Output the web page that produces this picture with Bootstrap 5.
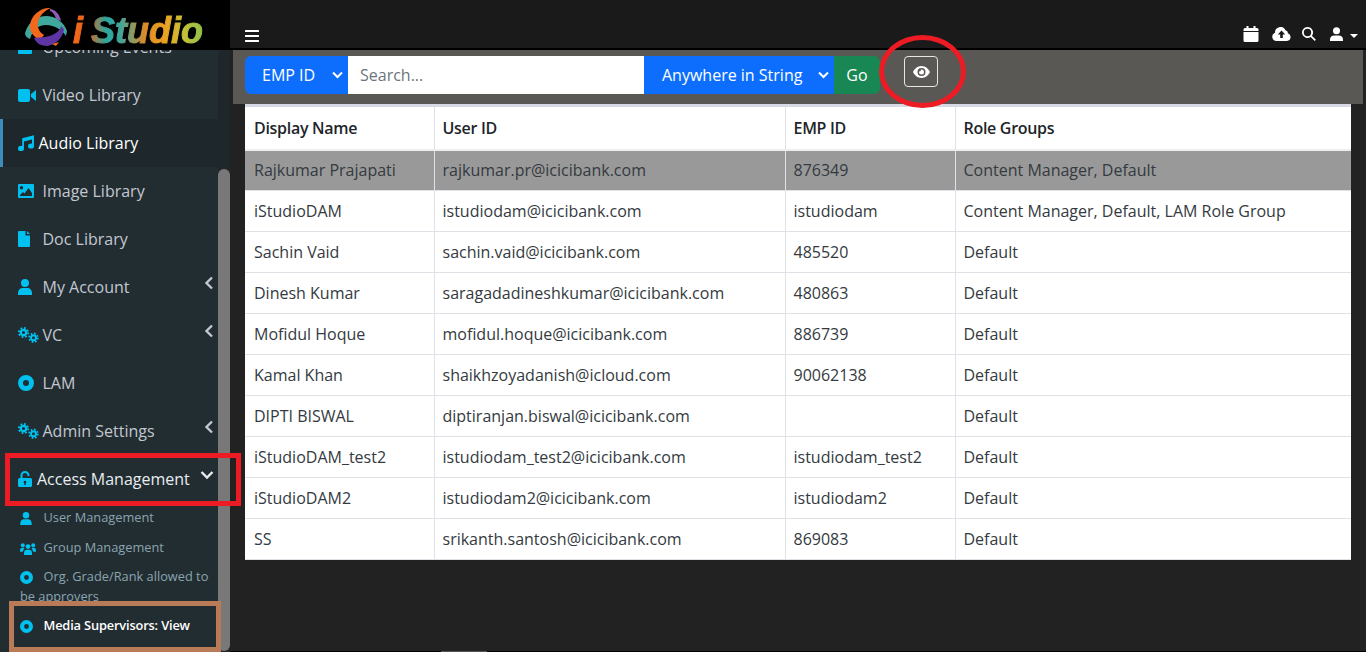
<!DOCTYPE html>
<html lang="en">
<head>
    <meta charset="UTF-8">
    <meta name="viewport" content="width=device-width, initial-scale=1">
    <title>iStudio - Media Supervisors</title>
    <link href="https://cdn.jsdelivr.net/npm/bootstrap@5.3.0/dist/css/bootstrap.min.css" rel="stylesheet">
    <script src="https://cdn.jsdelivr.net/npm/bootstrap@5.3.0/dist/js/bootstrap.bundle.min.js"></script>
    <style>
        html, body { height: 100%; overflow: hidden; }
        body {
            font-family: "Open Sans", "Liberation Sans", sans-serif;
            background: #222;
            position: relative;
            font-size: 16px;
        }

        /* shell */
        .app-shell { height: 652px; }
        .app-side { width: 230px; flex: none; position: relative; height: 652px; overflow: hidden; background: #222; }
        .app-main { flex: 1 1 auto; min-width: 0; height: 652px; }

        /* logo */
        .logo-box { height: 50px; background: #000; position: relative; z-index: 2; padding: 0 0 0 25px; }
        .logo-box svg { margin-top: 3px; flex: none; }
        .logo-word {
            font-family: "Liberation Sans", sans-serif;
            font-weight: 700;
            font-style: italic;
            font-size: 36px;
            line-height: 40px;
            margin: 12px 0 0 6px;
            word-spacing: -2px;
            -webkit-text-stroke: 1px transparent;
            background: linear-gradient(90deg, #f26a1b 0%, #e8611a 10%, #2aa7a0 26%, #3fa59a 36%, #d98a2c 55%, #eda021 70%, #c4c236 85%, #8fbf4b 100%);
            -webkit-background-clip: text;
            background-clip: text;
            color: transparent;
        }

        /* sidebar */
        .side-scroll { height: 602px; overflow: hidden; display: flex; }
        .side-menu { width: 218px; flex: none; background: #222d32; margin-top: -27px; height: 640px; }
        .side-rail { width: 12px; flex: none; background: #20272b; position: relative; }
        .rail-thumb { position: absolute; left: 0; right: 0; top: 119px; bottom: 1px; background: #787878; border-radius: 6px; }
        .menu-link {
            display: flex;
            align-items: center;
            height: 48px;
            padding-left: 18px;
            color: #c2c7d0;
            font-size: 16px;
            text-decoration: none;
            position: relative;
        }
        .menu-link .menu-ico { width: 24.5px; flex: none; }
        .menu-link svg { fill: #00c0ef; display: block; }
        .menu-link.is-on { background: #1e282c; color: #fff; border-left: 3px solid #3c8dbc; padding-left: 15px; }
        .menu-link.is-on .menu-ico { width: 20.5px; }
        .menu-link.is-open { color: #e8ecef; }
        .menu-link.is-open .menu-ico { width: 19px; }
        .menu-caret { position: absolute; right: 4px; top: 13px; width: 10px; height: 14px; fill: none !important; stroke: #c2c7d0; stroke-width: 2.4; }
        .is-open .menu-caret { right: 4px; top: 15px; width: 14px; height: 10px; stroke: #e8ecef; }
        .sub-link {
            display: block;
            padding-left: 20px;
            color: #8aa4af;
            font-size: 12.8px;
            line-height: 20px;
            text-decoration: none;
        }
        .sub-link .menu-ico { display: inline-block; width: 23.5px; line-height: 0; vertical-align: 0; }
        .sub-link svg { fill: #00c0ef; }
        .sub-link.is-on { color: #fff; font-weight: 600; letter-spacing: -.15px; }
        .sub-one { height: 30px; padding-top: 4px; }
        .sub-two { height: 48px; padding-top: 3px; }

        /* top bar */
        .top-bar { height: 48px; padding: 26px 8px 0 15px; background: #1a1a1a; }
        .top-sep { height: 2px; background: #000; }
        .top-bar svg { fill: #fff; display: block; }
        .ham-ico { margin-top: 4px; }
        .top-tools { height: 16px; }
        .tool-a { margin-left: 13px; }
        .tool-b { margin-left: 11px; }
        .tool-c { margin-left: 14px; }
        .tool-d { margin-left: 7px; }

        /* filter */
        .filter-bar { height: 54px; background: #5a5855; margin: 0 3px 0 3px; padding: 6px 12px; }
        .filter-group { width: 635px; height: 38px; }
        .filter-pick {
            appearance: none;
            background-color: #0d6efd;
            color: #fff;
            border: 0;
            height: 38px;
            font-family: inherit;
            font-size: 16px;
            padding: 0 30px 0 17px;
        }
        .pick-one { width: 103px; border-radius: 6px 0 0 6px; }
        .pick-two { width: 190px; padding-left: 18px; }
        .pick-wrap { position: relative; display: block; height: 38px; }
        .pick-wrap svg { position: absolute; right: 5px; top: 15px; width: 11px; height: 8px; fill: none; stroke: #fff; stroke-width: 2; pointer-events: none; }
        .filter-search {
            flex: 1 1 auto;
            min-width: 0;
            border: 0;
            height: 38px;
            padding: 0 12px;
            font-size: 16px;
            font-family: inherit;
            background: #fff;
            color: #212529;
            outline: 0;
        }
        .filter-search::placeholder { color: #6c757d; }
        .filter-go {
            width: 46px;
            height: 38px;
            border: 0;
            background: #198754;
            color: #fff;
            font-size: 16px;
            padding: 0;
            border-radius: 0 6px 6px 0;
        }
        .eye-btn {
            width: 34px;
            height: 31px;
            margin-left: 24px;
            border: 1px solid #e6e6e6;
            border-radius: 4px;
            background: transparent;
            padding: 0;
        }
        .eye-btn svg { display: block; margin: 0 auto; }

        /* table */
        .data-wrap { margin-left: 15px; width: 1106px; }
        .data-table {
            width: 1106px;
            table-layout: fixed;
            border-collapse: collapse;
            background: #fff;
            color: #343a40;
            font-size: 16px;
            margin: 0;
        }
        .data-table th, .data-table td {
            border: 1px solid #dee2e6;
            padding: 0 8px;
            height: 41px;
            vertical-align: middle;
            font-weight: 400;
        }
        .data-table th { height: 44px; font-weight: 600; letter-spacing: -.3px; color: #212529; border-top: 3px solid #d7dae4; border-bottom: 2px solid #eceeef; }
        .data-table tr > :first-child { border-left: 0; padding-left: 9px; }
        .data-table tr > :last-child { border-right: 0; }
        .data-table tr.row-picked td { background: #999; color: #343a40; }

        /* bottom edge of the window */
        .win-edge { height: 1px; background: #000; }
        .win-edge-bit { width: 46px; height: 1px; margin-left: 211px; background: #555; }

        /* annotations on top of the screenshot */
        .mark-red {
            position: absolute;
            left: 5px; top: 453px;
            width: 236px; height: 53px;
            border: 5px solid #ed1c24;
            z-index: 5;
        }
        .mark-brown {
            position: absolute;
            left: 9px; top: 601px;
            width: 212px; height: 51px;
            border: 5px solid #b97a57;
            z-index: 5;
        }
        .mark-ring {
            position: absolute;
            left: 879px; top: 35px;
            width: 87px; height: 73px;
            border: 5px solid #ed1c24;
            border-radius: 50%;
            z-index: 5;
        }
    </style>
</head>
<body>

<svg width="0" height="0" class="position-absolute">
    <defs>
        <symbol id="i-circle" viewBox="0 0 16 16"><path fill-rule="evenodd" d="M8 0a8 8 0 1 1 0 16A8 8 0 0 1 8 0zm0 5a3 3 0 1 0 0 6 3 3 0 0 0 0-6z"/></symbol>
        <symbol id="i-user" viewBox="0 0 14 16"><circle cx="7" cy="4" r="4"/><path d="M0 16v-2c0-3 2-5 4.500-5h5c2.500 0 4.500 2 4.500 5v2z"/></symbol>
        <symbol id="i-cogs" viewBox="0 0 21 16">
            <g fill="none" stroke="#00c0ef">
                <circle cx="5.500" cy="5.500" r="2.700" stroke-width="2.200"/>
                <circle cx="5.500" cy="5.500" r="4.600" stroke-width="1.800" stroke-dasharray="1.800 1.810"/>
                <circle cx="15.500" cy="10.700" r="2.500" stroke-width="2"/>
                <circle cx="15.500" cy="10.700" r="4.300" stroke-width="1.800" stroke-dasharray="1.690 1.690"/>
            </g>
        </symbol>
        <symbol id="i-caret-l" viewBox="0 0 10 14"><path d="M8 1.500 2.500 7 8 12.500"/></symbol>
        <symbol id="i-caret-d" viewBox="0 0 14 10"><path d="M1.500 2 7 7.500 12.500 2"/></symbol>
        <symbol id="i-chev" viewBox="0 0 11 8"><path d="M1 1.500 5.500 6 10 1.500"/></symbol>
    </defs>
</svg>

<div class="app-shell d-flex">
    <!-- sidebar -->
    <aside class="app-side">
        <div class="logo-box d-flex align-items-center">
            <svg width="42" height="39" viewBox="0 0 42 39">
                <path d="M25 2c7 1 10 7 11 12l-5-2c-1-4-3-7-6-8z" fill="#8e5bb5"/>
                <path d="M0 26C4 13 14 9 21 9c9 0 18 6 21 15l-1 5c-4-6-11-11-20-11-7 0-13 4-16 14-3-1-5-3-5-6z" fill="#3fa79c"/>
                <path d="M26 1C16 0 6 8 5 18c-1 7 4 12 10 15l4-5c-5-3-7-8-6-13 1-6 7-12 13-14z" fill="#f2691d"/>
                <path d="M9 31c6-1 15 0 22-5 3-2 5-5 5-7l3 3c-1 8-8 16-17 17-6 0-11-3-13-8z" fill="#5f35a5"/>
                <path d="M27 37l7-2-3 4z" fill="#f2691d"/>
            </svg>
            <span class="logo-word">i Studio</span>
        </div>
        <div class="side-scroll">
            <nav class="side-menu">
                <a class="menu-link" href="#"><span class="menu-ico"><svg width="14" height="14" viewBox="0 0 14 14"><rect width="14" height="14" rx="1"/></svg></span>Upcoming Events</a>
                <a class="menu-link" href="#"><span class="menu-ico"><svg width="18" height="13" viewBox="0 0 18 13"><rect width="12" height="13" rx="2"/><path d="M13 5l5-4v11l-5-4z"/></svg></span>Video Library</a>
                <a class="menu-link is-on" href="#"><span class="menu-ico"><svg width="16" height="16" viewBox="0 0 16 16"><ellipse cx="3" cy="13.400" rx="3" ry="2.600"/><ellipse cx="13" cy="11" rx="3" ry="2.600"/><path d="M4.200 3.200 16 .2V11h-2V4.500L6 6.500V13H4.200z"/></svg></span>Audio Library</a>
                <a class="menu-link" href="#"><span class="menu-ico"><svg width="16" height="14" viewBox="0 0 16 14"><path fill-rule="evenodd" d="M1 0h14a1 1 0 0 1 1 1v12a1 1 0 0 1-1 1H1a1 1 0 0 1-1-1V1a1 1 0 0 1 1-1zm2.500 2a1.700 1.700 0 1 0 0 3.400 1.700 1.700 0 0 0 0-3.400zM2 12h12V9L10.500 4 6.500 9.500 5 8l-3 3z"/></svg></span>Image Library</a>
                <a class="menu-link" href="#"><span class="menu-ico"><svg width="12" height="16" viewBox="0 0 12 16"><path d="M1 0h6.500v4.500H12V15a1 1 0 0 1-1 1H1a1 1 0 0 1-1-1V1a1 1 0 0 1 1-1zM9 0l3 3H9z"/></svg></span>Doc Library</a>
                <a class="menu-link" href="#"><span class="menu-ico"><svg width="14" height="16"><use href="#i-user"/></svg></span>My Account<svg class="menu-caret"><use href="#i-caret-l"/></svg></a>
                <a class="menu-link" href="#"><span class="menu-ico"><svg width="21" height="16"><use href="#i-cogs"/></svg></span>VC<svg class="menu-caret"><use href="#i-caret-l"/></svg></a>
                <a class="menu-link" href="#"><span class="menu-ico"><svg width="16" height="16"><use href="#i-circle"/></svg></span>LAM</a>
                <a class="menu-link" href="#"><span class="menu-ico"><svg width="21" height="16"><use href="#i-cogs"/></svg></span>Admin Settings<svg class="menu-caret"><use href="#i-caret-l"/></svg></a>
                <a class="menu-link is-open" href="#"><span class="menu-ico"><svg width="14" height="16" viewBox="0 0 14 16"><path d="M3.500 8V4.500a3.500 3.500 0 0 1 7 0V5" fill="none" stroke="#00c0ef" stroke-width="2"/><path fill-rule="evenodd" d="M1.500 7h11A1.500 1.500 0 0 1 14 8.500v6a1.500 1.500 0 0 1-1.500 1.500h-11A1.500 1.500 0 0 1 0 14.500v-6A1.500 1.500 0 0 1 1.500 7zM7 9.700a1.400 1.400 0 0 0-.7 2.600V14h1.400v-1.700A1.400 1.400 0 0 0 7 9.700z"/></svg></span>Access Management<svg class="menu-caret"><use href="#i-caret-d"/></svg></a>
                <a class="sub-link sub-one" href="#"><span class="menu-ico"><svg width="12" height="13"><use href="#i-user" width="12" height="13"/></svg></span>User Management</a>
                <a class="sub-link sub-one" href="#"><span class="menu-ico"><svg width="16" height="12" viewBox="0 0 20 15"><circle cx="10" cy="4.500" r="3"/><circle cx="3.500" cy="2.800" r="2.500"/><circle cx="16.500" cy="2.800" r="2.500"/><path d="M5 15v-2.500C5 10 7 8.500 8.500 8.500h3c1.500 0 3.500 1.500 3.500 4V15zM0 10c0-3 1-4 2.500-4h2.200l1 1.500C4 8.500 3.700 9.500 3.500 11H0zM20 10c0-3-1-4-2.500-4h-2.200l-1 1.500c1.700 1 2 2 2.200 3.500H20z"/></svg></span>Group Management</a>
                <a class="sub-link sub-two" href="#"><span class="menu-ico"><svg width="13" height="13"><use href="#i-circle"/></svg></span>Org. Grade/Rank allowed to be approvers</a>
                <a class="sub-link sub-one is-on" href="#"><span class="menu-ico"><svg width="13" height="13"><use href="#i-circle"/></svg></span>Media Supervisors: View</a>
            </nav>
            <div class="side-rail"><div class="rail-thumb"></div></div>
        </div>
    </aside>

    <!-- main -->
    <main class="app-main d-flex flex-column">
        <div class="top-bar d-flex align-items-start justify-content-between">
            <svg class="ham-ico" width="14" height="12" viewBox="0 0 14 12"><rect width="14" height="2" rx=".5"/><rect y="5" width="14" height="2" rx=".5"/><rect y="10" width="14" height="2" rx=".5"/></svg>
            <div class="top-tools d-flex align-items-center">
                <svg width="16" height="16" viewBox="0 0 15 16"><path d="M0 6h15v8.500a1.500 1.500 0 0 1-1.500 1.500h-12A1.500 1.500 0 0 1 0 14.500zM3 0h2v2h5V0h2v2h1.500A1.500 1.500 0 0 1 15 3.500V5H0V3.500A1.500 1.500 0 0 1 1.500 2H3z"/></svg>
                <svg class="tool-a" width="19" height="14" viewBox="0 0 19 14"><path fill-rule="evenodd" d="M4.500 14A4.300 4.300 0 0 1 3 5.700 5.500 5.500 0 0 1 13.500 3.200 3.500 3.500 0 0 1 16 6.300 4 4 0 0 1 15 14zM9.500 3.500 5.800 7.500h2.400V11h2.600V7.500h2.400z"/></svg>
                <svg class="tool-b" width="14" height="14" viewBox="0 0 14 14"><path fill-rule="evenodd" d="M5.500 0a5.500 5.500 0 0 1 4.400 8.800l4 4-1.200 1.200-4-4A5.500 5.500 0 1 1 5.500 0zm0 1.800a3.700 3.700 0 1 0 0 7.400 3.700 3.700 0 0 0 0-7.400z"/></svg>
                <svg class="tool-c" width="13" height="14" viewBox="0 0 14 15"><circle cx="7" cy="4" r="3.800"/><path d="M0 15v-1.500C0 10.500 2 9 4.500 9h5c2.500 0 4.500 1.500 4.500 4.500V15z"/></svg>
                <svg class="tool-d mt-1" width="8" height="4" viewBox="0 0 8 4"><path d="M0 0h8L4 4z"/></svg>
            </div>
        </div>
        <div class="top-sep"></div>

        <div class="filter-bar d-flex align-items-start">
            <div class="filter-group d-flex">
                <span class="pick-wrap">
                    <select class="filter-pick pick-one"><option>EMP ID</option></select>
                    <svg><use href="#i-chev"/></svg>
                </span>
                <input class="filter-search" type="text" placeholder="Search...">
                <span class="pick-wrap">
                    <select class="filter-pick pick-two"><option>Anywhere in String</option></select>
                    <svg><use href="#i-chev"/></svg>
                </span>
                <button class="filter-go" type="button">Go</button>
            </div>
            <button class="eye-btn" type="button">
                <svg width="17" height="12" viewBox="0 0 17 12"><path fill="#fff" fill-rule="evenodd" d="M8.500 0C12.500 0 15.500 2.800 17 6c-1.500 3.200-4.500 6-8.500 6S1.500 9.200 0 6C1.500 2.800 4.500 0 8.500 0zm0 2a4 4 0 1 0 0 8 4 4 0 0 0 0-8zm0 1.500A2.500 2.500 0 1 1 6 6c0-.3 0-.5.100-.7.500.6 1.900.3 1.700-1.700.2-.1.400-.1.700-.1z"/></svg>
            </button>
        </div>

        <div class="data-wrap">
            <table class="data-table">
                <colgroup>
                    <col style="width: 189px">
                    <col style="width: 351px">
                    <col style="width: 170px">
                    <col>
                </colgroup>
                <thead>
                    <tr><th>Display Name</th><th>User ID</th><th>EMP ID</th><th>Role Groups</th></tr>
                </thead>
                <tbody>
                    <tr class="row-picked"><td>Rajkumar Prajapati</td><td>rajkumar.pr@icicibank.com</td><td>876349</td><td>Content Manager, Default</td></tr>
                    <tr><td>iStudioDAM</td><td>istudiodam@icicibank.com</td><td>istudiodam</td><td>Content Manager, Default, LAM Role Group</td></tr>
                    <tr><td>Sachin Vaid</td><td>sachin.vaid@icicibank.com</td><td>485520</td><td>Default</td></tr>
                    <tr><td>Dinesh Kumar</td><td>saragadadineshkumar@icicibank.com</td><td>480863</td><td>Default</td></tr>
                    <tr><td>Mofidul Hoque</td><td>mofidul.hoque@icicibank.com</td><td>886739</td><td>Default</td></tr>
                    <tr><td>Kamal Khan</td><td>shaikhzoyadanish@icloud.com</td><td>90062138</td><td>Default</td></tr>
                    <tr><td>DIPTI BISWAL</td><td>diptiranjan.biswal@icicibank.com</td><td></td><td>Default</td></tr>
                    <tr><td>iStudioDAM_test2</td><td>istudiodam_test2@icicibank.com</td><td>istudiodam_test2</td><td>Default</td></tr>
                    <tr><td>iStudioDAM2</td><td>istudiodam2@icicibank.com</td><td>istudiodam2</td><td>Default</td></tr>
                    <tr><td>SS</td><td>srikanth.santosh@icicibank.com</td><td>869083</td><td>Default</td></tr>
                </tbody>
            </table>
        </div>

        <div class="win-edge mt-auto"><div class="win-edge-bit"></div></div>
    </main>
</div>

<!-- annotations -->
<div class="mark-red"></div>
<div class="mark-brown"></div>
<div class="mark-ring"></div>

</body>
</html>
